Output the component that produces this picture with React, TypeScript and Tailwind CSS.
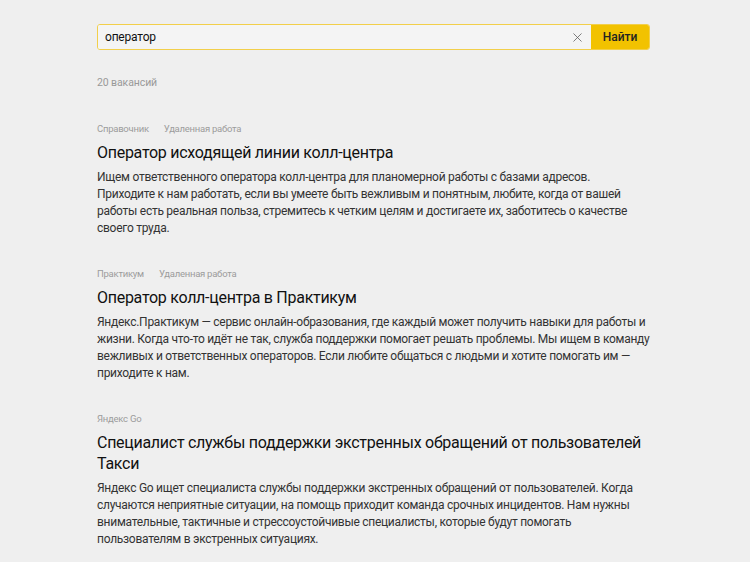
import { X } from "lucide-react";

const vacancies = [
  {
    tags: ["Справочник", "Удаленная работа"],
    title: "Оператор исходящей линии колл-центра",
    text: "Ищем ответственного оператора колл-центра для планомерной работы с базами адресов. Приходите к нам работать, если вы умеете быть вежливым и понятным, любите, когда от вашей работы есть реальная польза, стремитесь к четким целям и достигаете их, заботитесь о качестве своего труда.",
  },
  {
    tags: ["Практикум", "Удаленная работа"],
    title: "Оператор колл-центра в Практикум",
    text: "Яндекс.Практикум — сервис онлайн-образования, где каждый может получить навыки для работы и жизни. Когда что-то идёт не так, служба поддержки помогает решать проблемы. Мы ищем в команду вежливых и ответственных операторов. Если любите общаться с людьми и хотите помогать им — приходите к нам.",
  },
  {
    tags: ["Яндекс Go"],
    title: "Специалист службы поддержки экстренных обращений от пользователей Такси",
    text: "Яндекс Go ищет специалиста службы поддержки экстренных обращений от пользователей. Когда случаются неприятные ситуации, на помощь приходит команда срочных инцидентов. Нам нужны внимательные, тактичные и стрессоустойчивые специалисты, которые будут помогать пользователям в экстренных ситуациях.",
  },
];

export default function App() {
  return (
    <div className="min-h-screen bg-[#efefef] font-['Roboto',sans-serif] text-[#222]">
      <div className="ml-[97px] w-[553px] pt-[24px]">
        <div className="flex h-[26px] overflow-hidden rounded-[3px] border border-[#f2cf4a]">
          <div className="flex flex-1 items-center bg-[#f4f4f4] pl-[7px] pr-[6px]">
            <span className="flex-1 text-[12px] tracking-[-0.2px] text-[#111]">оператор</span>
            <X className="h-[15px] w-[15px] text-[#555]" strokeWidth={1.2} />
          </div>
          <button className="w-[58px] bg-[#f2c200] text-[12px] font-medium text-[#222]">
            Найти
          </button>
        </div>

        <div className="mt-[26px] text-[10.5px] leading-[14px] tracking-[-0.1px] text-[#999]">20 вакансий</div>

        <div className="mt-[32px] flex flex-col gap-[30px]">
          {vacancies.map((v) => (
            <div key={v.title}>
              <div className="flex gap-[15px] text-[9.5px] leading-[14px] tracking-[-0.25px] text-[#9c9c9c]">
                {v.tags.map((t) => (
                  <span key={t}>{t}</span>
                ))}
              </div>
              <h3 className="mt-[6px] text-[16px] leading-[21px] tracking-[-0.28px] text-[#111]">{v.title}</h3>
              <p className="mt-[6px] text-[12px] leading-[17px] tracking-[-0.27px] text-[#333]">{v.text}</p>
            </div>
          ))}
        </div>
      </div>
    </div>
  );
}
